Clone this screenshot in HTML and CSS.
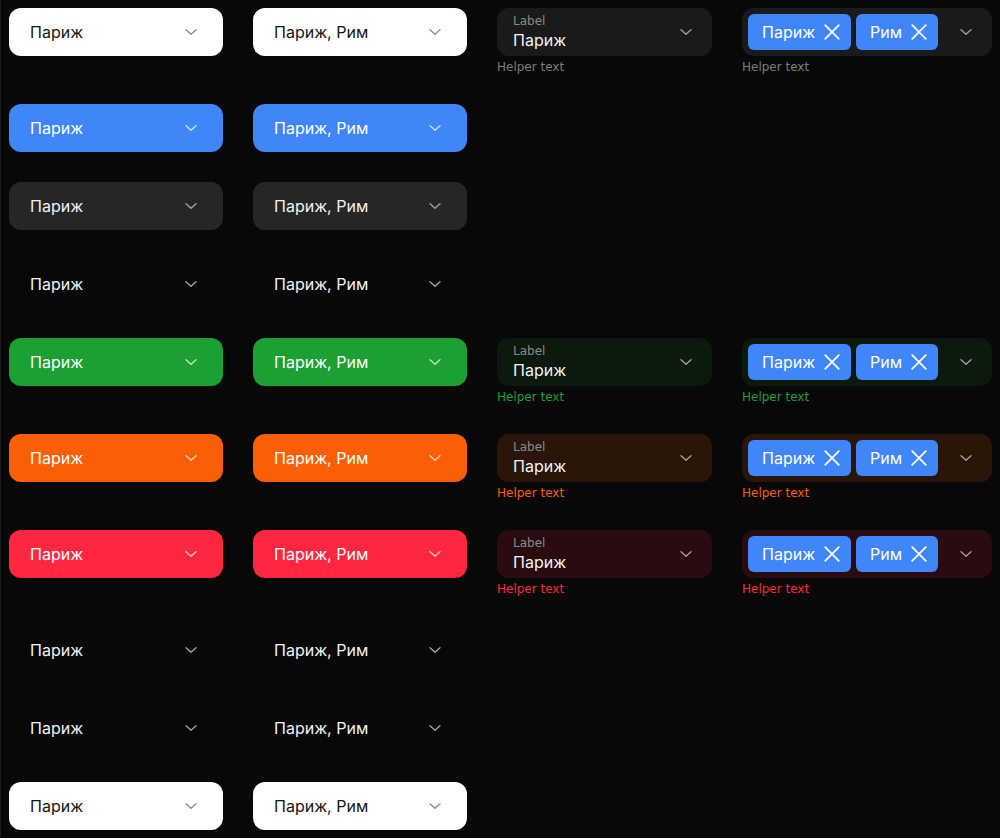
FILE: index.html
```html
<!DOCTYPE html>
<html lang="ru">
<head>
<meta charset="utf-8">
<title>Select</title>
<link rel="stylesheet" href="styles.css">
</head>
<body>
<svg width="0" height="0" class="defs" aria-hidden="true">
  <defs>
    <symbol id="chev" viewBox="0 0 24 24"><path d="M7 9.8 L12 14.3 L17 9.8" fill="none" stroke="currentColor" stroke-width="1.4" stroke-linecap="round" stroke-linejoin="round"/></symbol>
    <symbol id="cross" viewBox="0 0 24 24"><path d="M5.2 5.2 L18.8 18.8 M18.8 5.2 L5.2 18.8" fill="none" stroke="currentColor" stroke-width="1.7" stroke-linecap="round"/></symbol>
  </defs>
</svg>
<main class="grid">
  <!-- row 1 -->
  <div class="sel sel-white"><span>Париж</span><svg class="chev"><use href="#chev"/></svg></div>
  <div class="sel sel-white"><span>Париж, Рим</span><svg class="chev"><use href="#chev"/></svg></div>
  <div class="field">
    <div class="box box-default"><div class="lv"><span class="label">Label</span><span class="value">Париж</span></div><svg class="chev"><use href="#chev"/></svg></div>
    <div class="helper helper-default">Helper text</div>
  </div>
  <div class="field">
    <div class="chips-box box-default"><div class="chips"><span class="chip">Париж<svg class="x"><use href="#cross"/></svg></span><span class="chip">Рим<svg class="x"><use href="#cross"/></svg></span></div><svg class="chev"><use href="#chev"/></svg></div>
    <div class="helper helper-default">Helper text</div>
  </div>

  <!-- row 2 -->
  <div class="sel sel-blue"><span>Париж</span><svg class="chev"><use href="#chev"/></svg></div>
  <div class="sel sel-blue"><span>Париж, Рим</span><svg class="chev"><use href="#chev"/></svg></div>
  <div></div><div></div>

  <!-- row 3 -->
  <div class="sel sel-gray"><span>Париж</span><svg class="chev"><use href="#chev"/></svg></div>
  <div class="sel sel-gray"><span>Париж, Рим</span><svg class="chev"><use href="#chev"/></svg></div>
  <div></div><div></div>

  <!-- row 4 -->
  <div class="sel sel-clear"><span>Париж</span><svg class="chev"><use href="#chev"/></svg></div>
  <div class="sel sel-clear"><span>Париж, Рим</span><svg class="chev"><use href="#chev"/></svg></div>
  <div></div><div></div>

  <!-- row 5 success -->
  <div class="sel sel-green"><span>Париж</span><svg class="chev"><use href="#chev"/></svg></div>
  <div class="sel sel-green"><span>Париж, Рим</span><svg class="chev"><use href="#chev"/></svg></div>
  <div class="field">
    <div class="box box-green"><div class="lv"><span class="label">Label</span><span class="value">Париж</span></div><svg class="chev"><use href="#chev"/></svg></div>
    <div class="helper helper-green">Helper text</div>
  </div>
  <div class="field">
    <div class="chips-box box-green"><div class="chips"><span class="chip">Париж<svg class="x"><use href="#cross"/></svg></span><span class="chip">Рим<svg class="x"><use href="#cross"/></svg></span></div><svg class="chev"><use href="#chev"/></svg></div>
    <div class="helper helper-green">Helper text</div>
  </div>

  <!-- row 6 warning -->
  <div class="sel sel-orange"><span>Париж</span><svg class="chev"><use href="#chev"/></svg></div>
  <div class="sel sel-orange"><span>Париж, Рим</span><svg class="chev"><use href="#chev"/></svg></div>
  <div class="field">
    <div class="box box-orange"><div class="lv"><span class="label">Label</span><span class="value">Париж</span></div><svg class="chev"><use href="#chev"/></svg></div>
    <div class="helper helper-orange">Helper text</div>
  </div>
  <div class="field">
    <div class="chips-box box-orange"><div class="chips"><span class="chip">Париж<svg class="x"><use href="#cross"/></svg></span><span class="chip">Рим<svg class="x"><use href="#cross"/></svg></span></div><svg class="chev"><use href="#chev"/></svg></div>
    <div class="helper helper-orange">Helper text</div>
  </div>

  <!-- row 7 error -->
  <div class="sel sel-red"><span>Париж</span><svg class="chev"><use href="#chev"/></svg></div>
  <div class="sel sel-red"><span>Париж, Рим</span><svg class="chev"><use href="#chev"/></svg></div>
  <div class="field">
    <div class="box box-red"><div class="lv"><span class="label">Label</span><span class="value">Париж</span></div><svg class="chev"><use href="#chev"/></svg></div>
    <div class="helper helper-red">Helper text</div>
  </div>
  <div class="field">
    <div class="chips-box box-red"><div class="chips"><span class="chip">Париж<svg class="x"><use href="#cross"/></svg></span><span class="chip">Рим<svg class="x"><use href="#cross"/></svg></span></div><svg class="chev"><use href="#chev"/></svg></div>
    <div class="helper helper-red">Helper text</div>
  </div>

  <!-- row 8 -->
  <div class="sel sel-clear"><span>Париж</span><svg class="chev"><use href="#chev"/></svg></div>
  <div class="sel sel-clear"><span>Париж, Рим</span><svg class="chev"><use href="#chev"/></svg></div>
  <div></div><div></div>

  <!-- row 9 -->
  <div class="sel sel-clear"><span>Париж</span><svg class="chev"><use href="#chev"/></svg></div>
  <div class="sel sel-clear"><span>Париж, Рим</span><svg class="chev"><use href="#chev"/></svg></div>
  <div></div><div></div>

  <!-- row 10 -->
  <div class="sel sel-white"><span>Париж</span><svg class="chev"><use href="#chev"/></svg></div>
  <div class="sel sel-white"><span>Париж, Рим</span><svg class="chev"><use href="#chev"/></svg></div>
  <div></div><div></div>
</main>
</body>
</html>
```

FILE: styles.css
```css
html, body {
  height: 100%;
}
body {
  margin: 0;
  background: #080808;
  border-left: 1px solid #1c1c1c;
  padding: 8px;
  box-sizing: border-box;
  font-family: Inter, "Noto Sans", sans-serif;
  overflow: hidden;
}
.defs {
  position: absolute;
  width: 0;
  height: 0;
}
.grid {
  display: grid;
  grid-template-columns: 214px 214px 215px 250px;
  column-gap: 30px;
  row-gap: 30px;
  align-items: start;
}
.sel {
  height: 48px;
  box-sizing: border-box;
  border-radius: 12px;
  padding: 0 20px 0 21px;
  display: flex;
  align-items: center;
  justify-content: space-between;
  font-size: 16px;
  line-height: 20px;
}
.chev {
  width: 24px;
  height: 24px;
  flex: none;
}
.sel-white { background: #ffffff; color: #141414; }
.sel-white .chev { color: #8c8c8c; }
.sel-blue { background: #4086f9; color: #ffffff; }
.sel-blue .chev { color: rgba(255,255,255,0.72); }
.sel-gray { background: #262626; color: #f2f2f2; }
.sel-gray .chev { color: #a0a0a0; }
.sel-clear { background: transparent; color: #f2f2f2; }
.sel-clear .chev { color: #a0a0a0; }
.sel-green { background: #1c9f33; color: #ffffff; }
.sel-green .chev { color: rgba(255,255,255,0.72); }
.sel-orange { background: #fa5f05; color: #ffffff; }
.sel-orange .chev { color: rgba(255,255,255,0.72); }
.sel-red { background: #ff2640; color: #ffffff; }
.sel-red .chev { color: rgba(255,255,255,0.72); }

.field {
  display: flex;
  flex-direction: column;
}
.box {
  height: 48px;
  box-sizing: border-box;
  border-radius: 12px;
  padding: 6px 14px 6px 16px;
  display: flex;
  align-items: center;
  justify-content: space-between;
}
.lv {
  display: flex;
  flex-direction: column;
  gap: 2px;
}
.label {
  font-family: "DejaVu Sans", sans-serif;
  font-size: 12px;
  line-height: 14px;
  color: #8a8a8a;
}
.value {
  font-size: 16px;
  line-height: 20px;
  color: #f2f2f2;
}
.box .chev, .chips-box .chev { color: #a0a0a0; }
.box-default { background: #1a1a1a; }
.box-green { background: #0b1a0d; }
.box-orange { background: #2a1608; }
.box-red { background: #2a0c10; }

.chips-box {
  height: 48px;
  box-sizing: border-box;
  border-radius: 12px;
  padding: 6px 14px 6px 6px;
  display: flex;
  align-items: center;
  justify-content: space-between;
}
.chips {
  display: flex;
  gap: 5px;
}
.chip {
  height: 36px;
  box-sizing: border-box;
  border-radius: 6px;
  background: #4086f9;
  color: #ffffff;
  display: flex;
  align-items: center;
  gap: 5px;
  padding: 0 7px 0 14px;
  font-size: 16px;
  line-height: 20px;
}
.x {
  width: 24px;
  height: 24px;
  color: #ffffff;
}
.helper {
  margin-top: 4px;
  font-family: "DejaVu Sans", sans-serif;
  font-size: 12px;
  line-height: 14px;
}
.helper-default { color: #7c7c7c; }
.helper-green { color: #1c9f33; }
.helper-orange { color: #fa5f05; }
.helper-red { color: #ff2640; }
```
